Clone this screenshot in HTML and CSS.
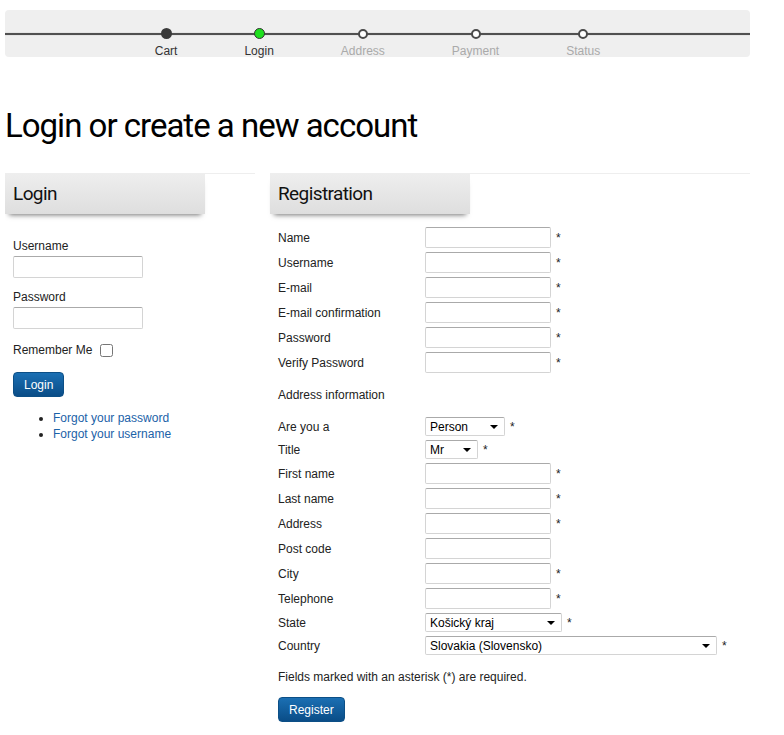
FILE: index.html
```html
<!DOCTYPE html>
<html lang="en">

<head>
    <meta charset="UTF-8">
    <meta name="viewport" content="width=device-width, initial-scale=1.0">
    <title>Login or create a new account</title>
    <link rel="stylesheet" href="styles.css">
</head>

<body>
    <!-- Шаги оформления заказа -->
    <div class="checkout-steps">
        <ul class="steps">
            <li class="step done"><span class="dot"></span>Cart</li>
            <li class="step current"><span class="dot"></span>Login</li>
            <li class="step"><span class="dot"></span>Address</li>
            <li class="step"><span class="dot"></span>Payment</li>
            <li class="step"><span class="dot"></span>Status</li>
        </ul>
    </div>

    <h1 class="page-title">Login or create a new account</h1>

    <div class="columns">
        <!-- Вход -->
        <div class="col col-login">
            <h2 class="box-title">Login</h2>
            <form class="login-form">
                <label class="field-label" for="login-user">Username</label>
                <input class="text" id="login-user" type="text">

                <label class="field-label" for="login-pass">Password</label>
                <input class="text" id="login-pass" type="password">

                <div class="remember">
                    <label for="remember">Remember Me</label>
                    <input class="check" id="remember" type="checkbox">
                </div>

                <button class="btn" type="button">Login</button>
            </form>
            <ul class="login-links">
                <li><a href="#">Forgot your password</a></li>
                <li><a href="#">Forgot your username</a></li>
            </ul>
        </div>

        <!-- Регистрация -->
        <div class="col col-register">
            <h2 class="box-title">Registration</h2>
            <form class="register-form">
                <div class="row"><label>Name</label><input class="text" type="text"><span class="req">*</span></div>
                <div class="row"><label>Username</label><input class="text" type="text"><span class="req">*</span></div>
                <div class="row"><label>E-mail</label><input class="text" type="text"><span class="req">*</span></div>
                <div class="row"><label>E-mail confirmation</label><input class="text" type="text"><span class="req">*</span></div>
                <div class="row"><label>Password</label><input class="text" type="password"><span class="req">*</span></div>
                <div class="row"><label>Verify Password</label><input class="text" type="password"><span class="req">*</span></div>

                <p class="section-note">Address information</p>

                <div class="row row-sel">
                    <label>Are you a</label>
                    <span class="select w-type"><select><option>Person</option><option>Company</option></select></span>
                    <span class="req">*</span>
                </div>
                <div class="row row-sel">
                    <label>Title</label>
                    <span class="select w-title"><select><option>Mr</option><option>Mrs</option></select></span>
                    <span class="req">*</span>
                </div>
                <div class="row"><label>First name</label><input class="text" type="text"><span class="req">*</span></div>
                <div class="row"><label>Last name</label><input class="text" type="text"><span class="req">*</span></div>
                <div class="row"><label>Address</label><input class="text" type="text"><span class="req">*</span></div>
                <div class="row"><label>Post code</label><input class="text" type="text"></div>
                <div class="row"><label>City</label><input class="text" type="text"><span class="req">*</span></div>
                <div class="row"><label>Telephone</label><input class="text" type="text"><span class="req">*</span></div>
                <div class="row row-sel">
                    <label>State</label>
                    <span class="select w-state"><select><option>Košický kraj</option></select></span>
                    <span class="req">*</span>
                </div>
                <div class="row row-sel">
                    <label>Country</label>
                    <span class="select w-country"><select><option>Slovakia (Slovensko)</option></select></span>
                    <span class="req">*</span>
                </div>

                <p class="form-note">Fields marked with an asterisk (*) are required.</p>

                <button class="btn" type="button">Register</button>
            </form>
        </div>
    </div>
</body>

</html>
```

FILE: styles.css
```css
/* Общие стили */
body {
    margin: 10px 34px 0 5px;
    font-family: "Liberation Sans", Arial, sans-serif;
    font-size: 12px;
    color: #222;
    background: #fff;
}

/* Шаги оформления */
.checkout-steps {
    position: relative;
    height: 47px;
    background-color: #efefef;
    border-radius: 4px;
}

.checkout-steps::before {
    content: "";
    position: absolute;
    left: 0;
    right: 0;
    top: 23px;
    height: 2px;
    background-color: #505050;
    box-shadow: 0 0 1px rgba(0, 0, 0, 0.4);
}

.steps {
    position: relative;
    display: flex;
    justify-content: center;
    gap: 67px;
    margin: 0;
    padding: 0;
    list-style: none;
}

.step {
    display: flex;
    flex-direction: column;
    align-items: center;
    padding-top: 19px;
    line-height: 15px;
    color: #aaa;
}

.dot {
    box-sizing: border-box;
    width: 10px;
    height: 10px;
    margin-bottom: 5px;
    border: 2px solid #4a4a4a;
    border-radius: 50%;
    background-color: #fff;
}

.step.done,
.step.current {
    color: #333;
}

.step.done .dot {
    width: 11px;
    height: 11px;
    margin-top: -1px;
    background-color: #3a3a3a;
    border-color: #3a3a3a;
}

.step.current .dot {
    width: 11px;
    height: 11px;
    margin-top: -1px;
    border-width: 1px;
    border-color: #333;
    background-color: #1ee01e;
}

/* Заголовок страницы */
.page-title {
    margin: 49px 0 27px;
    font-family: Roboto, "Liberation Sans", sans-serif;
    font-size: 33px;
    font-weight: normal;
    letter-spacing: -1px;
    line-height: 40px;
    color: #000;
}

.columns {
    display: flex;
    gap: 15px;
}

.col {
    border-top: 1px solid #eee;
}

.col-login {
    width: 250px;
}

.col-register {
    width: 480px;
}

.box-title {
    width: 192px;
    height: 40px;
    margin: 0;
    padding-left: 8px;
    font-family: Roboto, "Liberation Sans", sans-serif;
    font-size: 19px;
    font-weight: normal;
    letter-spacing: -0.6px;
    line-height: 40px;
    color: #111;
    background: linear-gradient(#eeeeee, #dedede);
    box-shadow: 0 5px 5px -4px rgba(0, 0, 0, 0.55);
}

/* Поля ввода */
.text {
    box-sizing: border-box;
    width: 126px;
    height: 21px;
    margin: 0;
    padding: 2px 4px;
    border: 1px solid #d4d4d4;
    border-top-color: #aaa;
    border-radius: 2px;
    font: inherit;
    background: #fff;
}

/* Форма входа */
.login-form {
    padding: 25px 0 0 8px;
}

.field-label {
    display: block;
    line-height: 15px;
    margin-bottom: 2px;
}

.login-form .text {
    display: block;
    width: 130px;
    height: 22px;
    margin-bottom: 12px;
}

.remember {
    display: flex;
    align-items: center;
    gap: 8px;
    margin: 14px 0 14px;
    line-height: 15px;
}

.check {
    width: 13px;
    height: 13px;
    margin: 0;
}

.btn {
    display: block;
    box-sizing: border-box;
    height: 25px;
    padding: 0 10px;
    border: 1px solid #0c4f86;
    border-radius: 4px;
    font: inherit;
    color: #fff;
    background: linear-gradient(#1b6fb3, #0a4d87);
    cursor: pointer;
}

.login-links {
    margin: 13px 0 0;
    padding-left: 48px;
    line-height: 16px;
}

.login-links a {
    color: #1b62a8;
    text-decoration: none;
}

/* Форма регистрации */
.register-form {
    padding: 11px 0 0 8px;
}

.row {
    display: flex;
    align-items: center;
    height: 25px;
}

.row-sel {
    height: 23px;
}

.row label {
    width: 147px;
    flex-shrink: 0;
}

.req {
    margin-left: 5px;
}

.section-note {
    margin: 13px 0 12px;
    line-height: 15px;
}

.form-note {
    margin: 13px 0 12px;
    line-height: 15px;
}

/* Выпадающие списки */
.select {
    position: relative;
    display: inline-block;
}

.select select {
    box-sizing: border-box;
    width: 100%;
    height: 19px;
    padding: 0 4px;
    border: 1px solid #d4d4d4;
    border-top-color: #aaa;
    border-radius: 2px;
    font: inherit;
    color: #000;
    background: #fff;
    appearance: none;
    -webkit-appearance: none;
}

.select::after {
    content: "";
    position: absolute;
    right: 7px;
    top: 8px;
    border-left: 4px solid transparent;
    border-right: 4px solid transparent;
    border-top: 4px solid #000;
    pointer-events: none;
}

.w-type {
    width: 80px;
}

.w-title {
    width: 53px;
}

.w-state {
    width: 137px;
}

.w-country {
    width: 292px;
}
```
